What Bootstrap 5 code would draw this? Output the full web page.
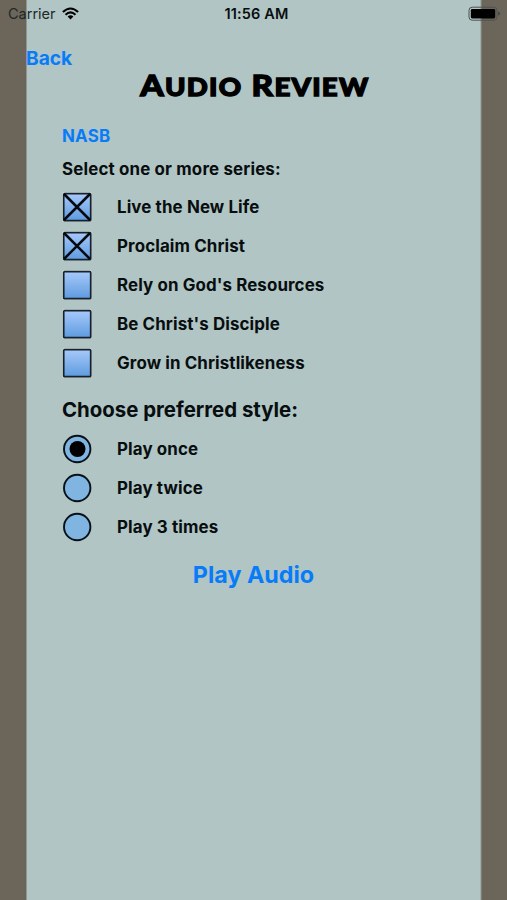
<!DOCTYPE html>
<html lang="en">
<head>
<meta charset="utf-8">
<meta name="viewport" content="width=device-width, initial-scale=1">
<title>Audio Review</title>
<link href="https://cdn.jsdelivr.net/npm/bootstrap@5.3.0/dist/css/bootstrap.min.css" rel="stylesheet">
<style>
body{font-family:Inter,"Liberation Sans",sans-serif;color:#080e0f;background:linear-gradient(90deg,#6c665a 26px,#b1c5c4 27px,#b1c5c4 480px,#6c665a 482px);height:900px;overflow:hidden}
.status-bar{height:28px;padding:0 6px 0 8px;font-size:14.5px;line-height:28px}
.status-bar .side{flex:1 1 0}
.clock{font-weight:600;font-size:14.5px;padding-left:4px;letter-spacing:.15px}
.carrier{color:#20282a}
.ios-link{color:#087cf8;border:0;padding:0;background:none;font-weight:700;display:block}
.back-link{margin:19px 0 0 26px;font-size:19.2px;line-height:22px}
.page-title{font-family:Lato,"Open Sans",sans-serif;font-weight:900;font-size:29px;line-height:32px;width:max-content;margin:0 auto;color:#000;transform:scaleX(1.15);letter-spacing:1.1px;padding-left:2px;-webkit-text-stroke:1.3px #000}
.page-title .rest{font-size:24px}
.panel{padding:0 62px}
.version{font-size:16.9px;line-height:24px;margin-top:21px;letter-spacing:.2px}
.prompt{font-size:16.9px;line-height:24px;font-weight:700;margin-top:9px;margin-bottom:6px;letter-spacing:.16px}
.choice{height:39px;gap:25px;font-size:16.9px;font-weight:700;letter-spacing:.12px}
.choice svg{margin-top:1px}
.choice span{line-height:24px;margin-top:1px}
.prompt-lg{font-size:20.4px;line-height:30px;font-weight:700;margin:13px 0 4px}
.play-link{font-size:23.3px;line-height:32px;margin:13px auto 0}
</style>
</head>
<body>
<svg width="0" height="0" class="position-absolute" aria-hidden="true"><defs>
<linearGradient id="fill" x1="0" y1="0" x2="0" y2="1"><stop offset="0" stop-color="#a6c9fa"/><stop offset="1" stop-color="#5e9bdf"/></linearGradient>
<symbol id="box" viewBox="0 0 30 30"><rect x=".5" y=".5" width="29.2" height="29.2" rx="1.5" fill="none" stroke="#c9d7d5"/><rect x="1.7" y="1.7" width="27" height="27" rx="1" fill="url(#fill)" stroke="#17202b" stroke-width="1.7"/></symbol>
<symbol id="box-x" viewBox="0 0 30 30"><use href="#box"/><path d="M2 2 28 28M28 2 2 28" stroke="#050a10" stroke-width="2.5"/></symbol>
<symbol id="ring" viewBox="0 0 30 30"><circle cx="15.2" cy="15" r="13.2" fill="#80b5e2" stroke="#071119" stroke-width="1.9"/></symbol>
<symbol id="ring-dot" viewBox="0 0 30 30"><use href="#ring"/><circle cx="15.5" cy="15" r="8" fill="#000"/></symbol>
</defs></svg>
<header class="status-bar d-flex align-items-center">
<div class="side d-flex align-items-center"><span class="carrier">Carrier</span>
<svg width="17" height="13" viewBox="0 0 17 13" style="margin-left:6px;margin-top:-1px" fill="none" stroke="#000" stroke-width="2.1"><path d="M.9 5Q8.5-2 16.1 5M3.5 7.7Q8.5 3.2 13.5 7.7"/><path d="M5.6 9.5Q8.5 7 11.4 9.5L8.5 12.5Z" fill="#000" stroke="none"/></svg></div>
<span class="clock">11:56 AM</span>
<div class="side d-flex justify-content-end"><svg width="33" height="16" viewBox="0 0 33 16"><rect x="1" y="1.2" width="28" height="13" rx="3.2" fill="none" stroke="#4b5351" stroke-width="1"/><rect x="2.8" y="3" width="24.4" height="9.4" rx="1.4"/><path d="M30.5 5.5Q33 7.6 30.5 9.8Z" fill="#35332f"/></svg></div>
</header>
<main>
<button class="ios-link back-link">Back</button>
<h1 class="page-title text-center">A<span class="rest">UDIO</span> R<span class="rest">EVIEW</span></h1>
<div class="panel">
<button class="ios-link version">NASB</button>
<p class="prompt">Select one or more series:</p>
<div class="choice d-flex align-items-center"><svg width="30" height="30"><use href="#box-x"/></svg><span>Live the New Life</span></div>
<div class="choice d-flex align-items-center"><svg width="30" height="30"><use href="#box-x"/></svg><span>Proclaim Christ</span></div>
<div class="choice d-flex align-items-center"><svg width="30" height="30"><use href="#box"/></svg><span>Rely on God's Resources</span></div>
<div class="choice d-flex align-items-center"><svg width="30" height="30"><use href="#box"/></svg><span>Be Christ's Disciple</span></div>
<div class="choice d-flex align-items-center"><svg width="30" height="30"><use href="#box"/></svg><span>Grow in Christlikeness</span></div>
<p class="prompt-lg">Choose preferred style:</p>
<div class="choice d-flex align-items-center"><svg width="30" height="30"><use href="#ring-dot"/></svg><span>Play once</span></div>
<div class="choice d-flex align-items-center"><svg width="30" height="30"><use href="#ring"/></svg><span>Play twice</span></div>
<div class="choice d-flex align-items-center"><svg width="30" height="30"><use href="#ring"/></svg><span>Play 3 times</span></div>
<button class="ios-link play-link">Play Audio</button>
</div>
</main>
<script src="https://cdn.jsdelivr.net/npm/bootstrap@5.3.0/dist/js/bootstrap.bundle.min.js"></script>
</body>
</html>
